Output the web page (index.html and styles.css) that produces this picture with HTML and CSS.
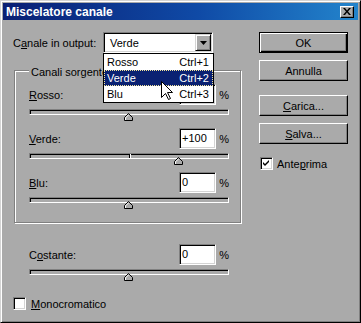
FILE: index.html
```html
<!DOCTYPE html>
<html lang="it">
<head>
    <meta charset="UTF-8">
    <title>Miscelatore canale</title>
    <link rel="stylesheet" href="styles.css">
</head>
<body>
<div class="window">
    <div class="titlebar">
        <span class="title">Miscelatore canale</span>
        <span class="close-btn">
            <svg width="8" height="7" viewBox="0 0 8 7"><path d="M0 0h2l2 2.4L6 0h2L5 3.5 8 7H6L4 4.6 2 7H0l3-3.5z" fill="#000"/></svg>
        </span>
    </div>

    <div class="dialog">
        <div class="left-col">
            <div class="output-row">
                <span class="output-label">C<u>a</u>nale in output:</span>
                <div class="combo">
                    <span class="combo-value">Verde</span>
                    <span class="combo-btn">
                        <svg width="7" height="4" viewBox="0 0 7 4"><path d="M0 0h7L3.5 4z" fill="#000"/></svg>
                    </span>
                    <ul class="combo-list">
                        <li><span>Rosso</span><span>Ctrl+1</span></li>
                        <li class="selected"><span>Verde</span><span>Ctrl+2</span></li>
                        <li><span>Blu</span><span>Ctrl+3</span></li>
                    </ul>
                </div>
            </div>

            <div class="group">
                <span class="group-title">Canali sorgente</span>

                <div class="slider">
                    <div class="slider-head">
                        <span class="slider-label"><u>R</u>osso:</span>
                        <span class="field"></span>
                        <span class="pct">%</span>
                    </div>
                    <div class="track">
                        <svg class="thumb" style="left: 50%" width="9" height="8" viewBox="0 0 9 8"><path d="M4.5 0.5L8.5 4.5V7.5H0.5V4.5Z" fill="#aaa" stroke="#000"/><path d="M1.5 7V4.9L4.5 1.9" fill="none" stroke="#fff"/></svg>
                    </div>
                </div>

                <div class="slider">
                    <div class="slider-head">
                        <span class="slider-label"><u>V</u>erde:</span>
                        <span class="field">+100</span>
                        <span class="pct">%</span>
                    </div>
                    <div class="track zero">
                        <svg class="thumb" style="left: 75%" width="9" height="8" viewBox="0 0 9 8"><path d="M4.5 0.5L8.5 4.5V7.5H0.5V4.5Z" fill="#aaa" stroke="#000"/><path d="M1.5 7V4.9L4.5 1.9" fill="none" stroke="#fff"/></svg>
                    </div>
                </div>

                <div class="slider">
                    <div class="slider-head">
                        <span class="slider-label"><u>B</u>lu:</span>
                        <span class="field">0</span>
                        <span class="pct">%</span>
                    </div>
                    <div class="track">
                        <svg class="thumb" style="left: 50%" width="9" height="8" viewBox="0 0 9 8"><path d="M4.5 0.5L8.5 4.5V7.5H0.5V4.5Z" fill="#aaa" stroke="#000"/><path d="M1.5 7V4.9L4.5 1.9" fill="none" stroke="#fff"/></svg>
                    </div>
                </div>
            </div>

            <div class="slider const">
                <div class="slider-head">
                    <span class="slider-label">C<u>o</u>stante:</span>
                    <span class="field">0</span>
                    <span class="pct">%</span>
                </div>
                <div class="track">
                    <svg class="thumb" style="left: 50%" width="9" height="8" viewBox="0 0 9 8"><path d="M4.5 0.5L8.5 4.5V7.5H0.5V4.5Z" fill="#aaa" stroke="#000"/><path d="M1.5 7V4.9L4.5 1.9" fill="none" stroke="#fff"/></svg>
                </div>
            </div>

            <div class="check mono">
                <span class="checkbox"></span>
                <span><u>M</u>onocromatico</span>
            </div>
        </div>

        <div class="right-col">
            <button class="btn default">OK</button>
            <button class="btn">Annulla</button>
            <button class="btn load"><u>C</u>arica...</button>
            <button class="btn"><u>S</u>alva...</button>
            <div class="check preview">
                <span class="checkbox">
                    <svg width="7" height="7" viewBox="0 0 7 7"><path d="M0 2L2 4L6 0V2L2 6L0 4Z" fill="#000"/></svg>
                </span>
                <span>Ante<u>p</u>rima</span>
            </div>
        </div>
    </div>

    <svg class="cursor" width="12" height="19" viewBox="0 0 12 19"><path d="M0.5 0.5V16.5L4.5 12.5L7.5 18.5L9.5 17.5L6.5 11.5H11.5Z" fill="#fff" stroke="#000"/></svg>
</div>
</body>
</html>
```

FILE: styles.css
```css
body {
    margin: 0;
    font-family: "Liberation Sans", Arial, sans-serif;
    font-size: 11px;
    color: #000;
}

.window {
    position: relative;
    width: 361px;
    height: 323px;
    box-sizing: border-box;
    padding: 2px;
    background: #aaa;
    border: 1px solid;
    border-color: #d4d4d4 #000 #000 #d4d4d4;
    box-shadow: inset 1px 1px 0 #fff, inset -1px -1px 0 #808080;
}

.titlebar {
    display: flex;
    align-items: center;
    justify-content: space-between;
    height: 17px;
    padding: 0 4px 0 3px;
    background: linear-gradient(to right, #0a1f74, #0f4aa6 55%, #2384cc);
    color: #fff;
    font-size: 12px;
    font-weight: bold;
}

.close-btn {
    display: flex;
    align-items: center;
    justify-content: center;
    width: 14px;
    height: 12px;
    box-sizing: border-box;
    background: #aaa;
    border: 1px solid;
    border-color: #fff #000 #000 #fff;
    box-shadow: inset -1px -1px 0 #808080;
}

.dialog {
    display: flex;
}

.left-col {
    width: 256px;
}

/* canale in output */
.output-row {
    display: flex;
    align-items: center;
    height: 21px;
    margin-top: 12px;
    padding-left: 10px;
}

.output-label {
    width: 90px;
}

.combo {
    position: relative;
    display: flex;
    align-items: center;
    width: 110px;
    height: 21px;
    box-sizing: border-box;
    padding: 0 1px 0 6px;
    background: #fff;
    border: 1px solid;
    border-color: #808080 #fff #fff #808080;
    box-shadow: inset 1px 1px 0 #000, inset -1px -1px 0 #d4d4d4;
}

.combo-btn {
    display: flex;
    align-items: center;
    justify-content: center;
    width: 16px;
    height: 17px;
    margin-left: auto;
    box-sizing: border-box;
    background: #aaa;
    border: 1px solid;
    border-color: #d4d4d4 #000 #000 #d4d4d4;
    box-shadow: inset 1px 1px 0 #fff, inset -1px -1px 0 #808080;
}

.combo-list {
    position: absolute;
    top: 20px;
    left: -1px;
    z-index: 2;
    width: 111px;
    margin: 0;
    padding: 0;
    list-style: none;
    box-sizing: border-box;
    background: #fff;
    border: 1px solid #000;
}

.combo-list li {
    display: flex;
    justify-content: space-between;
    height: 16px;
    line-height: 16px;
    padding: 0 4px 0 3px;
    box-sizing: border-box;
}

.combo-list li.selected {
    background: #0a2172;
    color: #fff;
    outline: 1px dotted #f2e49a;
    outline-offset: -1px;
}

/* gruppo canali */
.group {
    position: relative;
    width: 227px;
    height: 153px;
    margin: 17px 0 0 11px;
    padding: 13px 0 0 14px;
    box-sizing: border-box;
    border: 1px solid #808080;
    box-shadow: 1px 1px 0 #fff, inset 1px 1px 0 #fff;
}

.group-title {
    position: absolute;
    top: -6px;
    left: 14px;
    padding: 0 2px;
    line-height: 14px;
    background: #aaa;
}

.slider {
    width: 200px;
    height: 44px;
}

.slider-head {
    display: flex;
    align-items: center;
    height: 21px;
}

.slider-label {
    flex: 1;
}

.field {
    width: 37px;
    height: 21px;
    box-sizing: border-box;
    padding-left: 2px;
    line-height: 19px;
    background: #fff;
    border: 1px solid;
    border-color: #808080 #fff #fff #808080;
    box-shadow: inset 1px 1px 0 #000, inset -1px -1px 0 #d4d4d4;
}

.pct {
    width: 13px;
    text-align: right;
}

.track {
    position: relative;
    height: 6px;
    margin-top: 4px;
    box-sizing: border-box;
    border: 1px solid;
    border-color: #808080 #fff #fff #808080;
    box-shadow: inset 1px 1px 0 #000;
}

.track.zero::before {
    content: '';
    position: absolute;
    top: 0;
    bottom: 0;
    left: 50%;
    width: 1px;
    background: #000;
    border-right: 1px solid #fff;
}

.thumb {
    position: absolute;
    top: 3px;
    margin-left: -5px;
}

.const {
    margin: 21px 0 0 26px;
}

/* checkbox */
.check {
    display: flex;
    align-items: center;
    height: 13px;
}

.checkbox {
    display: flex;
    align-items: center;
    justify-content: center;
    width: 13px;
    height: 13px;
    margin-right: 5px;
    box-sizing: border-box;
    background: #fff;
    border: 1px solid;
    border-color: #808080 #fff #fff #808080;
    box-shadow: inset 1px 1px 0 #000, inset -1px -1px 0 #d4d4d4;
}

.mono {
    margin: 9px 0 0 10px;
}

/* pulsanti */
.right-col {
    width: 89px;
    padding-top: 12px;
}

.btn {
    display: block;
    width: 89px;
    height: 21px;
    margin: 0 0 7px;
    padding: 0;
    box-sizing: border-box;
    font: inherit;
    color: #000;
    text-align: center;
    background: #aaa;
    border: 1px solid;
    border-color: #fff #000 #000 #fff;
    box-shadow: inset -1px -1px 0 #808080;
}

.btn.default {
    border-color: #000;
    box-shadow: inset 1px 1px 0 #fff, inset -1px -1px 0 #000, inset -2px -2px 0 #808080;
}

.btn.load {
    margin-top: 14px;
}

.preview {
    margin: 13px 0 0 1px;
}

.preview .checkbox {
    margin-right: 4px;
}

.cursor {
    position: absolute;
    top: 80px;
    left: 160px;
    z-index: 3;
}
```
